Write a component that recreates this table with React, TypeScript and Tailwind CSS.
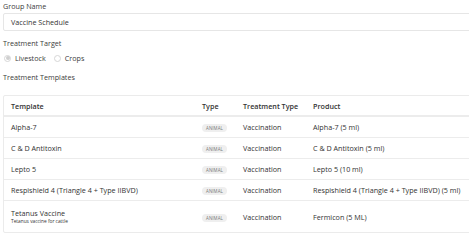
const rows = [
  { name: 'Alpha-7', product: 'Alpha-7 (5 ml)' },
  { name: 'C & D Antitoxin', product: 'C & D Antitoxin (5 ml)' },
  { name: 'Lepto 5', product: 'Lepto 5 (10 ml)' },
  { name: 'Respishield 4 (Triangle 4 + Type IIBVD)', product: 'Respishield 4 (Triangle 4 + Type IIBVD) (5 ml)' },
  { name: 'Tetanus Vaccine', sub: 'Tetanus vaccine for cattle', product: 'Fermicon (5 ML)' },
];

function Radio({ label, checked }: { label: string; checked?: boolean }) {
  return (
    <label className="flex items-center gap-[4px]">
      <span className="flex h-[7px] w-[7px] items-center justify-center rounded-full border border-[#d6d6d6] bg-white">
        {checked && <span className="h-[4px] w-[4px] rounded-full bg-[#cfcfcf]" />}
      </span>
      <span>{label}</span>
    </label>
  );
}

export default function App() {
  return (
    <div className="h-[244px] w-[469px] overflow-hidden bg-white font-['Open_Sans',sans-serif] text-[7.2px] leading-[10px] text-[#3d3d3d]">
      <div className="w-[490px] pl-[3px]">
        <div className="pt-[1px]">Group Name</div>
        <div className="mt-[2px] flex h-[18px] items-center rounded-[2px] border border-[#e6e6e6] px-[7px] text-[#333]">
          Vaccine Schedule
        </div>

        <div className="mt-[7px]">Treatment Target</div>
        <div className="mt-[5px] flex items-center gap-[8px] pl-[1px]">
          <Radio label="Livestock" checked />
          <Radio label="Crops" />
        </div>

        <div className="mt-[9px]">Treatment Templates</div>

        <div className="mt-[13px] rounded-[2px] border border-[#ebebeb] text-[#333]">
          <div className="grid h-[21px] grid-cols-[191px_41px_70px_1fr] items-center border-b-2 border-[#ececec] px-[7px] font-semibold">
            <div>Template</div>
            <div>Type</div>
            <div>Treatment Type</div>
            <div>Product</div>
          </div>
          {rows.map((r, i) => (
            <div
              key={r.name}
              className={`grid grid-cols-[191px_41px_70px_1fr] items-center px-[7px] ${
                r.sub ? 'h-[31px]' : 'h-[21px]'
              } ${i < rows.length - 1 ? 'border-b border-[#ececec]' : ''}`}
            >
              <div>
                <div>{r.name}</div>
                {r.sub && <div className="text-[4.8px] leading-[7px]">{r.sub}</div>}
              </div>
              <div>
                <span className="inline-flex h-[8px] items-center rounded-full bg-[#efefef] px-[4px] text-[4.4px] tracking-[0.1px] text-[#777]">
                  ANIMAL
                </span>
              </div>
              <div>Vaccination</div>
              <div>{r.product}</div>
            </div>
          ))}
        </div>

        <div className="mt-[8px]">Description</div>
      </div>
    </div>
  );
}
